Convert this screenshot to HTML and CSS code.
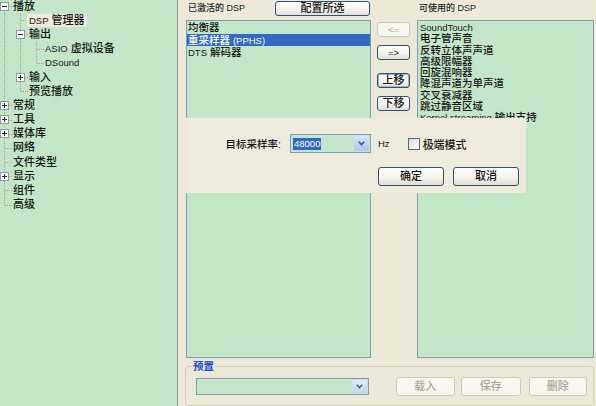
FILE: index.html
```html
<!DOCTYPE html>
<html lang="zh-CN">
<head>
<meta charset="utf-8">
<title>DSP 管理器</title>
<link rel="stylesheet" href="styles.css">
</head>
<body>
<div class="app">
  <nav class="tree">
    <div class="tree-list">
      <div class="row"><span class="node first"><svg class="box" width="9" height="9" viewBox="0 0 9 9"><rect x="0.5" y="0.5" width="8" height="8" fill="#f7f7f3" stroke="#8c9ba8"/><path d="M2 4.5h5" stroke="#2a2a2a"/></svg></span><span class="label">播放</span></div>
      <div class="row"><span class="ind v"></span><span class="node"></span><span class="label sel"><span class="en">DSP</span> 管理器</span></div>
      <div class="row"><span class="ind v"></span><span class="node"><svg class="box" width="9" height="9" viewBox="0 0 9 9"><rect x="0.5" y="0.5" width="8" height="8" fill="#f7f7f3" stroke="#8c9ba8"/><path d="M2 4.5h5" stroke="#2a2a2a"/></svg></span><span class="label">输出</span></div>
      <div class="row"><span class="ind v"></span><span class="ind v"></span><span class="node"></span><span class="label"><span class="en">ASIO</span> 虚拟设备</span></div>
      <div class="row"><span class="ind v"></span><span class="ind v"></span><span class="node last"></span><span class="label"><span class="en">DSound</span></span></div>
      <div class="row"><span class="ind v"></span><span class="node"><svg class="box" width="9" height="9" viewBox="0 0 9 9"><rect x="0.5" y="0.5" width="8" height="8" fill="#f7f7f3" stroke="#8c9ba8"/><path d="M2 4.5h5M4.5 2v5" stroke="#2a2a2a"/></svg></span><span class="label">输入</span></div>
      <div class="row"><span class="ind v"></span><span class="node last"></span><span class="label">预览播放</span></div>
      <div class="row"><span class="node"><svg class="box" width="9" height="9" viewBox="0 0 9 9"><rect x="0.5" y="0.5" width="8" height="8" fill="#f7f7f3" stroke="#8c9ba8"/><path d="M2 4.5h5M4.5 2v5" stroke="#2a2a2a"/></svg></span><span class="label">常规</span></div>
      <div class="row"><span class="node"><svg class="box" width="9" height="9" viewBox="0 0 9 9"><rect x="0.5" y="0.5" width="8" height="8" fill="#f7f7f3" stroke="#8c9ba8"/><path d="M2 4.5h5M4.5 2v5" stroke="#2a2a2a"/></svg></span><span class="label">工具</span></div>
      <div class="row"><span class="node"><svg class="box" width="9" height="9" viewBox="0 0 9 9"><rect x="0.5" y="0.5" width="8" height="8" fill="#f7f7f3" stroke="#8c9ba8"/><path d="M2 4.5h5M4.5 2v5" stroke="#2a2a2a"/></svg></span><span class="label">媒体库</span></div>
      <div class="row"><span class="node"></span><span class="label">网络</span></div>
      <div class="row"><span class="node"></span><span class="label">文件类型</span></div>
      <div class="row"><span class="node"><svg class="box" width="9" height="9" viewBox="0 0 9 9"><rect x="0.5" y="0.5" width="8" height="8" fill="#f7f7f3" stroke="#8c9ba8"/><path d="M2 4.5h5M4.5 2v5" stroke="#2a2a2a"/></svg></span><span class="label">显示</span></div>
      <div class="row"><span class="node"></span><span class="label">组件</span></div>
      <div class="row"><span class="node last"></span><span class="label">高级</span></div>
    </div>
  </nav>

  <main class="pane">
    <div class="cols">
      <section class="col">
        <div class="head">
          <span class="lbl">已激活的 DSP</span>
          <button class="btn cfg">配置所选</button>
        </div>
        <ul class="list active">
          <li>均衡器</li>
          <li class="selected">重采样器 <span class="en">(PPHS)</span></li>
          <li><span class="en">DTS</span> 解码器</li>
        </ul>
      </section>
      <div class="mid">
        <button class="btn sm disabled"><span class="en">&lt;=</span></button>
        <button class="btn sm"><span class="en">=&gt;</span></button>
        <button class="btn sm focus gap">上移</button>
        <button class="btn sm">下移</button>
      </div>
      <section class="col">
        <div class="head"><span class="lbl">可使用的 DSP</span></div>
        <ul class="list avail">
          <li><span class="en">SoundTouch</span></li>
          <li>电子管声音</li>
          <li>反转立体声声道</li>
          <li>高级限幅器</li>
          <li>回旋混响器</li>
          <li>降混声道为单声道</li>
          <li>交叉衰减器</li>
          <li>跳过静音区域</li>
          <li><span class="en">Kernel streaming</span> 输出支持</li>
        </ul>
      </section>
    </div>

    <fieldset class="preset">
      <legend>预置</legend>
      <div class="preset-row">
        <div class="combo wide">
          <span class="combo-text"></span>
          <span class="drop light"><svg width="7" height="5" viewBox="0 0 7 5"><polyline points="0.8,0.8 3.5,3.6 6.2,0.8" fill="none" stroke="#4d6185" stroke-width="1.5"/></svg></span>
        </div>
        <button class="btn disabled pb load">载入</button>
        <button class="btn disabled pb save">保存</button>
        <button class="btn disabled pb del">删除</button>
      </div>
    </fieldset>
  </main>

  <div class="dialog">
    <div class="dlg-row">
      <span class="dlg-label">目标采样率:</span>
      <div class="combo rate">
        <span class="combo-text"><span class="hl en">48000</span></span>
        <span class="drop"><svg width="7" height="5" viewBox="0 0 7 5"><polyline points="0.8,0.8 3.5,3.6 6.2,0.8" fill="none" stroke="#3b5486" stroke-width="1.6"/></svg></span>
      </div>
      <span class="hz en">Hz</span>
      <span class="check"></span>
      <span class="check-label">极端模式</span>
    </div>
    <div class="dlg-actions">
      <button class="btn dlg">确定</button>
      <button class="btn dlg">取消</button>
    </div>
  </div>
</div>
</body>
</html>
```

FILE: styles.css
```css
* { box-sizing: border-box; }
html, body { margin: 0; padding: 0; }
body {
  width: 596px;
  height: 406px;
  overflow: hidden;
  background: #ece9d8;
  font-family: "Liberation Sans", "Noto Sans CJK SC", sans-serif;
  font-size: 11px;
  font-weight: 500;
  color: #161616;
}
.en { font-size: 9.5px; }

.app {
  position: relative;
  display: grid;
  grid-template-columns: 178px 1fr;
  height: 406px;
}

/* ---------- tree ---------- */
.tree {
  background: #c3e6c9;
  border-right: 1px solid #8d9a92;
  overflow: hidden;
}
.tree-list { margin: -1px 0 0 -4px; }
.row {
  display: flex;
  align-items: center;
  height: 14.2px;
  white-space: nowrap;
}
.ind, .node {
  flex: none;
  width: 16px;
  height: 100%;
  display: flex;
  align-items: center;
  padding-left: 4px;
}
.ind.v {
  background: repeating-linear-gradient(to bottom, #9aa89f 0 1px, transparent 1px 2px) 8px 0 / 1px 100% no-repeat;
}
.node {
  background:
    repeating-linear-gradient(to right, #9aa89f 0 1px, transparent 1px 2px) 9px 7px / 7px 1px no-repeat,
    repeating-linear-gradient(to bottom, #9aa89f 0 1px, transparent 1px 2px) 8px 0 / 1px 100% no-repeat;
}
.node.first {
  background:
    repeating-linear-gradient(to right, #9aa89f 0 1px, transparent 1px 2px) 9px 7px / 7px 1px no-repeat,
    repeating-linear-gradient(to bottom, #9aa89f 0 1px, transparent 1px 2px) 8px 7px / 1px 100% no-repeat;
}
.node.last {
  background:
    repeating-linear-gradient(to right, #9aa89f 0 1px, transparent 1px 2px) 9px 7px / 7px 1px no-repeat,
    repeating-linear-gradient(to bottom, #9aa89f 0 1px, transparent 1px 2px) 8px 0 / 1px 7px no-repeat;
}
.box { display: block; }
.label {
  margin-left: -1px;
  padding: 0 2px;
  line-height: 13px;
  font-size: 11px;
}
.label.sel { background: #efeadb; }

/* ---------- main pane ---------- */
.pane {
  display: flex;
  flex-direction: column;
  padding: 0 2px 0 8px;
  min-width: 0;
}
.cols {
  display: grid;
  grid-template-columns: 185px 46px 1fr;
  height: 358px;
}
.col {
  display: flex;
  flex-direction: column;
  min-width: 0;
}
.head {
  height: 20px;
  flex: none;
  display: flex;
  justify-content: space-between;
  align-items: flex-start;
}
.lbl {
  font-size: 9px;
  line-height: 17px;
  padding-left: 2px;
  color: #222;
}
.list {
  flex: 1;
  margin: 0;
  padding: 0;
  list-style: none;
  background: #c3e6c9;
  border: 1px solid #7f9db9;
  overflow: hidden;
  font-size: 10.5px;
}
.list li { white-space: nowrap; }
.list.active li {
  height: 12.5px;
  line-height: 12.5px;
  padding-left: 1px;
}
.list.active li.selected {
  background: #316ac5;
  color: #fff;
}
.list.avail { padding-top: 1px; }
.list.avail li {
  height: 11.3px;
  line-height: 11.3px;
  padding-left: 2px;
}

/* ---------- buttons ---------- */
.btn {
  font: inherit;
  font-size: 11px;
  color: #161616;
  padding: 0;
  border: 1px solid #34507a;
  border-radius: 3px;
  background: linear-gradient(#fefefd, #f5f4ef 55%, #e2dfd2);
  display: flex;
  align-items: center;
  justify-content: center;
  line-height: 1;
}
.btn.disabled {
  border-color: #cdcabb;
  color: #aca899;
  background: #f7f6f1;
}
.btn.cfg {
  width: 95px;
  height: 15px;
  margin: 1px 1px 0 0;
}
.mid {
  display: flex;
  flex-direction: column;
  padding: 22px 0 0 6px;
  gap: 8px;
}
.btn.sm {
  width: 33px;
  height: 15px;
}
.btn.sm.gap { margin-top: 5px; }
.btn.focus { box-shadow: inset 0 0 0 1px #9fb2d3; }

/* ---------- preset group ---------- */
.preset {
  margin: 2px 0 0 -1px;
  padding: 0 6px;
  border: 1px solid #d0d0bf;
  border-radius: 3px;
  min-width: 0;
  flex: 1;
}
.preset legend {
  padding: 0 1px;
  font-size: 10.5px;
  line-height: 12px;
  color: #1c4fc8;
  font-weight: bold;
}
.preset-row {
  display: flex;
  align-items: center;
  margin-top: 5px;
  height: 19px;
}
.combo {
  display: flex;
  align-items: stretch;
  background: #c3e6c9;
  border: 1px solid #7f9db9;
  padding: 1px;
}
.combo.wide {
  width: 174px;
  height: 17px;
  margin-left: 4px;
}
.combo-text {
  flex: 1;
  display: flex;
  align-items: center;
  padding-left: 1px;
}
.hl {
  background: #316ac5;
  color: #fff;
  line-height: 12px;
  padding: 0 1px;
}
.drop {
  width: 15px;
  flex: none;
  display: flex;
  align-items: center;
  justify-content: center;
  background: linear-gradient(#d9e4fc, #afc3f2);
  border-radius: 2px;
}
.drop.light { background: linear-gradient(#e3eafb, #c4d3f3); }
.btn.pb { height: 19px; width: 60px; }
.btn.load { margin-left: 27px; }
.btn.save { margin-left: 6px; }
.btn.del { margin-left: 8px; width: 59px; }

/* ---------- dialog overlay ---------- */
.dialog {
  position: absolute;
  left: 185px;
  top: 118px;
  width: 341px;
  height: 75px;
  background: #eeebdd;
  padding-top: 16px;
}
.dlg-row {
  display: flex;
  align-items: center;
  height: 19px;
}
.dlg-label {
  width: 96px;
  margin-right: 9px;
  text-align: right;
  font-size: 10.5px;
}
.combo.rate {
  width: 81px;
  height: 19px;
}
.hz { margin-left: 7px; }
.check {
  margin-left: 18px;
  width: 12px;
  height: 12px;
  border: 1px solid #4e6b8f;
  background: linear-gradient(135deg, #dcdbd2, #ffffff);
}
.check-label {
  margin-left: 3px;
  font-size: 11px;
}
.dlg-actions {
  display: flex;
  gap: 9px;
  margin: 14px 0 0 193px;
}
.btn.dlg {
  width: 66px;
  height: 19px;
}
```
